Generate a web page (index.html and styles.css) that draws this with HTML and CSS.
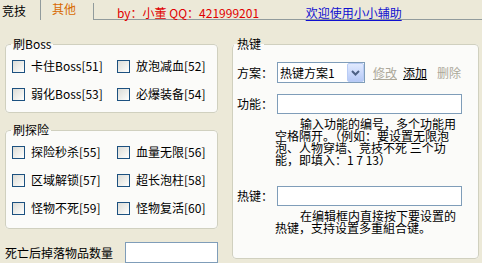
FILE: index.html
```html
<!DOCTYPE html>
<html lang="zh-CN">
<head>
<meta charset="utf-8">
<title>小小辅助</title>
<link rel="stylesheet" href="styles.css">
</head>
<body>
<div class="window">
  <div class="tabbar">
    <div class="tab">竞技</div>
    <div class="tab tab-active">其他</div>
    <div class="tab-rest">
      <span class="author">by：小董 QQ：421999201</span>
      <span class="welcome">欢迎使用小小辅助</span>
    </div>
  </div>

  <div class="page">
    <div class="col-left">
      <fieldset class="group group-boss">
        <legend>刷Boss</legend>
        <div class="checks">
          <label class="check"><input type="checkbox" class="box">卡住Boss[51]</label>
          <label class="check"><input type="checkbox" class="box">放泡减血[52]</label>
          <label class="check"><input type="checkbox" class="box">弱化Boss[53]</label>
          <label class="check"><input type="checkbox" class="box">必爆装备[54]</label>
        </div>
      </fieldset>

      <fieldset class="group group-explore">
        <legend>刷探险</legend>
        <div class="checks">
          <label class="check"><input type="checkbox" class="box">探险秒杀[55]</label>
          <label class="check"><input type="checkbox" class="box">血量无限[56]</label>
          <label class="check"><input type="checkbox" class="box">区域解锁[57]</label>
          <label class="check"><input type="checkbox" class="box">超长泡柱[58]</label>
          <label class="check"><input type="checkbox" class="box">怪物不死[59]</label>
          <label class="check"><input type="checkbox" class="box">怪物复活[60]</label>
        </div>
      </fieldset>

      <div class="drop-row">
        <span class="drop-label">死亡后掉落物品数量</span>
        <input type="text" class="textbox drop-input">
      </div>
    </div>

    <fieldset class="group group-hotkey">
      <legend>热键</legend>
      <div class="hk-body">
        <div class="hk-row hk-scheme">
          <span class="hk-label">方案：</span>
          <div class="combo">
            <span class="combo-text">热键方案1</span>
            <span class="combo-btn"><svg width="15" height="17" viewBox="0 0 15 17"><path d="M4 7 L7.5 10.5 L11 7" fill="none" stroke="#4D6185" stroke-width="2"/></svg></span>
          </div>
          <span class="link link-disabled link-underline">修改</span>
          <span class="link link-add">添加</span>
          <span class="link link-disabled link-del">删除</span>
        </div>

        <div class="hk-row hk-func">
          <span class="hk-label">功能：</span>
          <input type="text" class="textbox hk-input">
        </div>
        <p class="hk-help">输入功能的编号，多个功能用<br>空格隔开。（例如：要设置无限泡<br>泡、人物穿墙、竞技不死 三个功<br>能，即填入：1 7 13）</p>

        <div class="hk-row hk-key">
          <span class="hk-label">热键：</span>
          <input type="text" class="textbox hk-input">
        </div>
        <p class="hk-help">在编辑框内直接按下要设置的<br>热键，支持设置多重組合键。</p>
      </div>
    </fieldset>
  </div>
</div>
</body>
</html>
```

FILE: styles.css
```css
* {
  box-sizing: border-box;
}

html, body {
  margin: 0;
  padding: 0;
}

body {
  width: 482px;
  height: 263px;
  overflow: hidden;
  background: #ECE9D8;
  color: #000;
  font-family: "Noto Sans CJK SC", "Noto Sans", sans-serif;
  font-size: 12px;
  line-height: 12px;
}

.window {
  width: 482px;
  height: 263px;
}

/* ---------- tab bar ---------- */
.tabbar {
  display: flex;
  height: 20px;
}

.tab {
  width: 41px;
  height: 20px;
  padding: 5px 0 0 2px;
  border-right: 1px solid #919B9C;
  white-space: nowrap;
}

.tab-active {
  width: 53px;
  height: 17px;
  margin-top: 3px;
  padding: 0 0 0 11px;
  color: #D86A00;
}

.tab-rest {
  flex: 1;
  height: 20px;
  border-bottom: 1px solid #919B9C;
  padding: 7px 0 0 23px;
  white-space: nowrap;
}

.author {
  display: inline-block;
  width: 186px;
  color: #E00000;
}

.welcome {
  color: #1010D0;
  text-decoration: underline;
  text-underline-offset: 2px;
}

/* ---------- page ---------- */
.page {
  display: flex;
  align-items: flex-start;
  gap: 14px;
  padding: 18px 0 0 5px;
}

.col-left {
  width: 213px;
  display: flex;
  flex-direction: column;
}

.group {
  margin: 0;
  padding: 0;
  min-inline-size: 0;
  border: 1px solid #D0D0BF;
  border-radius: 4px;
  background: #FBFBF9;
}

.group legend {
  padding: 0 2px;
  margin-left: 5px;
  line-height: 12px;
  font-size: 12px;
}

.checks {
  display: grid;
  grid-template-columns: 105px auto;
  grid-auto-rows: 20px;
  row-gap: 8px;
  padding-left: 6px;
}

.group-boss .checks {
  padding-top: 6px;
  padding-bottom: 8px;
}

.group-explore {
  margin-top: 11px;
}

.group-explore .checks {
  padding-top: 6px;
  padding-bottom: 10px;
}

.check {
  display: flex;
  align-items: center;
  gap: 6px;
  white-space: nowrap;
}

.box {
  appearance: none;
  -webkit-appearance: none;
  margin: 0;
  width: 13px;
  height: 13px;
  border: 1px solid #1C5180;
  background: linear-gradient(135deg, #DCDCD7 0%, #F4F4F1 70%, #FFFFFF 100%);
  flex: none;
}

.drop-row {
  display: flex;
  align-items: center;
  margin-top: 13px;
  height: 21px;
}

.drop-label {
  flex: 1;
  white-space: nowrap;
}

.textbox {
  margin: 0;
  padding: 0;
  border: 1px solid #7F9DB9;
  background: #FFFFFF;
  font: inherit;
}

.drop-input {
  width: 93px;
  height: 21px;
}

/* ---------- hotkey group ---------- */
.group-hotkey {
  width: 247px;
}

.group-hotkey legend {
  margin-left: 1px;
  padding: 0 3px;
}

.hk-body {
  padding: 12px 0 24px 4px;
}

.hk-row {
  display: flex;
  align-items: center;
}

.hk-label {
  width: 40px;
  flex: none;
  white-space: nowrap;
}

.hk-scheme {
  height: 21px;
}

.combo {
  width: 88px;
  height: 21px;
  border: 1px solid #7F9DB9;
  background: #FFFFFF;
  display: flex;
  align-items: center;
}

.combo-text {
  flex: 1;
  padding-left: 2px;
  white-space: nowrap;
}

.combo-btn {
  width: 17px;
  height: 19px;
  border: 1px solid #B9CCF5;
  border-radius: 2px;
  background: linear-gradient(180deg, #E1EAFE 0%, #C9D8FB 55%, #B6C9F6 100%);
  display: flex;
  align-items: center;
  justify-content: center;
}

.link {
  white-space: nowrap;
}

.link-disabled {
  color: #ACA899;
}

.link-underline {
  margin-left: 8px;
  text-decoration: underline;
}

.link-add {
  margin-left: 6px;
  text-decoration: underline;
}

.link-del {
  margin-left: 10px;
}

.hk-func {
  margin-top: 11px;
  height: 20px;
}

.hk-key {
  margin-top: 20px;
  height: 20px;
}

.hk-input {
  width: 185px;
  height: 20px;
}

.hk-help {
  margin: 4px 0 0 38px;
  width: 190px;
  line-height: 12px;
  text-indent: 25px;
  white-space: nowrap;
}
```
